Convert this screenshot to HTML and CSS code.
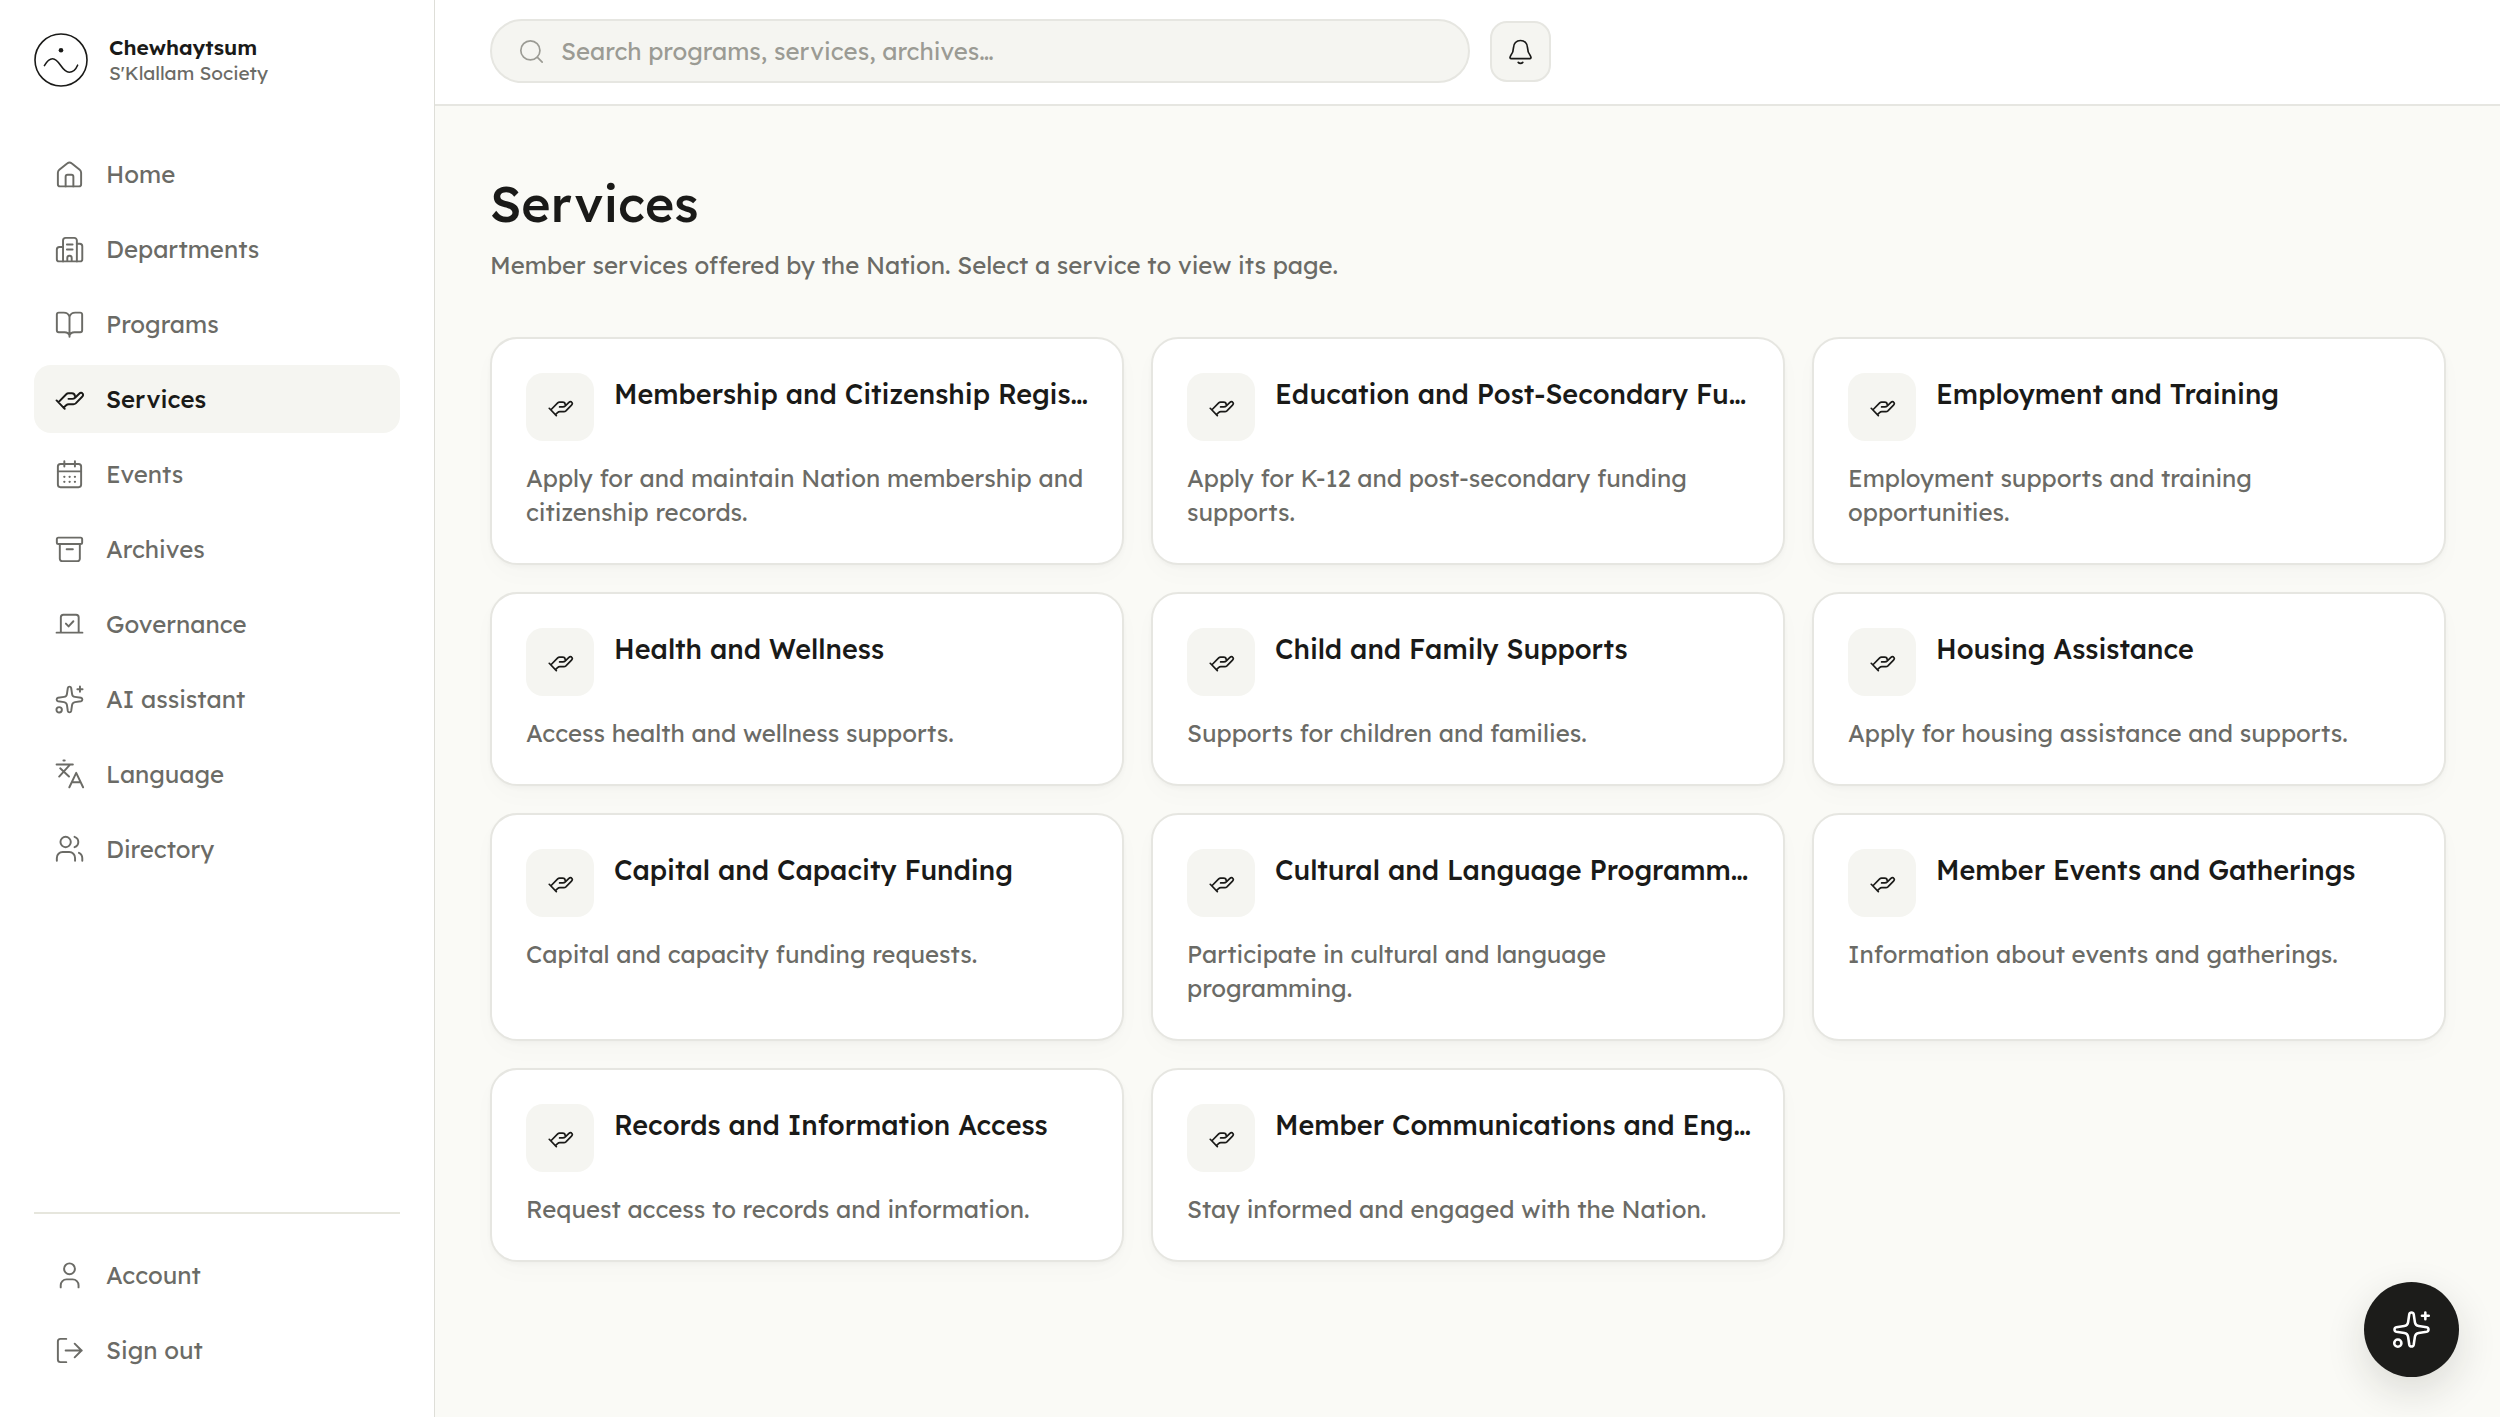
FILE: index.html
```html
<!DOCTYPE html>
<html lang="en">
<head>
<meta charset="utf-8">
<meta name="viewport" content="width=device-width, initial-scale=1">
<title>Services</title>
<link rel="stylesheet" href="styles.css">
</head>
<body>
<svg class="sprite" aria-hidden="true">
  <symbol id="home" viewBox="0 0 24 24"><path d="M3 10.6a3 3 0 0 1 1.1-2.3l6.3-5a2.5 2.5 0 0 1 3.2 0l6.3 5a3 3 0 0 1 1.1 2.3v8.9a1.7 1.7 0 0 1-1.7 1.7H4.700a1.700 1.700 0 0 1-1.700-1.700z"/><path d="M9 21.200v-7.500a1.500 1.500 0 0 1 1.500-1.500h3a1.500 1.500 0 0 1 1.500 1.500v7.500"/></symbol>
  <symbol id="building" viewBox="0 0 24 24"><path d="M7 21.200V5a2 2 0 0 1 2-2h6.700a2 2 0 0 1 2 2v16.200"/><path d="M7 10H4.200a2 2 0 0 0-2 2v7.500a1.700 1.700 0 0 0 1.700 1.700h16.300a1.700 1.700 0 0 0 1.700-1.700V9.500a2 2 0 0 0-2-2h-2.200M10 8.200h4.400M10 12h4.400M10.300 21v-2.500a1.700 1.700 0 0 1 3.400 0V21"/></symbol>
  <symbol id="book" viewBox="0 0 24 24"><path d="M12 6v15.500M12 6c-.6-2-2.200-3.200-4.500-3.200H3.700a1.500 1.500 0 0 0-1.500 1.500v12.200A1.500 1.500 0 0 0 3.700 18h4.500c2 0 3.300.8 3.800 2.500.5-1.700 1.800-2.500 3.800-2.500h4.500a1.500 1.500 0 0 0 1.500-1.500V4.300a1.500 1.500 0 0 0-1.500-1.500h-3.800C14.200 2.800 12.600 4 12 6z"/></symbol>
  <symbol id="hand" viewBox="0 0 24 24"><path d="m2 12.700 6.300 6.500M3.500 14l6-6.100a2.400 2.400 0 0 1 1.700-.7h2.600c1.600 0 2.300 1 2.300 2M11.200 11.500h2.900c1 0 1.600-.3 2.200-.9l3.200-3.100c.9-.9 2-.8 2.500-.2.700.8.500 1.900-.2 2.600l-5 5.100a2.600 2.600 0 0 1-1.800.7h-3.600a3 3 0 0 0-2 .8l-2 1.900"/></symbol>
  <symbol id="calendar" viewBox="0 0 24 24"><rect x="3" y="3.800" width="18" height="18" rx="2"/><path d="M3 9.600h18M8 1.800v4M16.200 1.800v4"/><path class="dots" d="M8 13.800h.01M12.100 13.800h.01M16.200 13.800h.01M8 17.700h.01M12.100 17.700h.01M16.200 17.700h.01"/></symbol>
  <symbol id="archive" viewBox="0 0 24 24"><rect x="2.200" y="2.800" width="19.600" height="5" rx="1.200"/><path d="M4.500 7.800V19.200A1.800 1.800 0 0 0 6.300 21h11.900a1.800 1.800 0 0 0 1.800-1.800V7.800M9.800 11.800h4.800"/></symbol>
  <symbol id="vote" viewBox="0 0 24 24"><path d="M2 18.300h20M5.300 18.300V6.400a2 2 0 0 1 2-2h9.800a2 2 0 0 1 2 2v11.900M9.200 11.300l2.100 2.200 3.700-4"/></symbol>
  <symbol id="sparkle" viewBox="0 0 24 24"><path d="M10.700 3.100c.3-1.400 2.300-1.400 2.600 0l.7 4.700c.2 1.300.9 2 2.200 2.200l4.700.7c1.400.3 1.400 2.300 0 2.600l-4.700.7c-1.300.2-2 .9-2.200 2.200l-.7 4.700c-.3 1.400-2.300 1.400-2.600 0l-.7-4.700c-.2-1.300-.9-2-2.200-2.200l-4.700-.7c-1.400-.3-1.400-2.300 0-2.600l4.700-.7c1.300-.2 2-.9 2.200-2.200zM20.100 2v4M22.100 4h-4"/><circle cx="4" cy="20" r="2.100"/></symbol>
  <symbol id="language" viewBox="0 0 24 24"><path d="M2 4.200h12.600M7.300 1.200h1M12.400 4.400 4 13.600M4.800 7.200l6.800 6.400M11.900 21.900l5.300-11.200 5.300 11.200M13.800 18h6.800"/></symbol>
  <symbol id="users" viewBox="0 0 24 24"><circle cx="9" cy="6.200" r="4"/><path d="M15.900 2.200a4.200 4.200 0 0 1 0 8M2.200 20.700v-2.200a4.500 4.500 0 0 1 4.500-4.500h5.100a4.500 4.500 0 0 1 4.500 4.500v2.200M19.300 14.600c1.700.7 2.600 2.200 2.600 4.200v1.900"/></symbol>
  <symbol id="user" viewBox="0 0 24 24"><circle cx="12" cy="6.800" r="4.200"/><path d="M5.200 21.200v-1.700a4.500 4.500 0 0 1 4.500-4.500h4.800a4.500 4.500 0 0 1 4.500 4.500v1.700"/></symbol>
  <symbol id="signout" viewBox="0 0 24 24"><path d="M9.500 3H5a2 2 0 0 0-2 2v14a2 2 0 0 0 2 2h4.500M9 12h12.500M16 6.700l5.300 5.300-5.300 5.300"/></symbol>
  <symbol id="search" viewBox="0 0 24 24"><circle cx="11" cy="11" r="8.500"/><path d="m17.300 17.300 4.200 4.200"/></symbol>
  <symbol id="bell" viewBox="0 0 24 24"><path d="M12 2.200c-3.700 0-6.200 2.700-6.200 6.200 0 3.700-.7 5-2.700 7.700-.8 1.200-.4 2.200.7 2.200h16.400c1.100 0 1.500-1 .7-2.200-2-2.700-2.700-4-2.700-7.700 0-3.500-2.500-6.200-6.200-6.200zM10 21.700c1 1.200 3 1.200 4 0"/></symbol>
</svg>

<div class="app">
  <aside class="sidebar">
    <a class="brand" href="#">
      <svg class="brand-mark" viewBox="0 0 54 54" aria-hidden="true"><circle cx="27" cy="27" r="26"/><circle class="brand-dot" cx="27" cy="17.300" r="2.300"/><path d="M10.400 32.600C13 28.300 15.600 25.800 18.600 25.800c7 0 9 13.400 16.600 13.400 3.400 0 6.800-3.200 8.400-7"/></svg>
      <span class="brand-text"><span class="brand-name">Chewhaytsum</span><span class="brand-sub">S'Klallam Society</span></span>
    </a>
    <nav class="nav">
      <a class="nav-item" href="#"><svg class="icon"><use href="#home"/></svg>Home</a>
      <a class="nav-item" href="#"><svg class="icon"><use href="#building"/></svg>Departments</a>
      <a class="nav-item" href="#"><svg class="icon"><use href="#book"/></svg>Programs</a>
      <a class="nav-item active" href="#" aria-current="page"><svg class="icon"><use href="#hand"/></svg>Services</a>
      <a class="nav-item" href="#"><svg class="icon"><use href="#calendar"/></svg>Events</a>
      <a class="nav-item" href="#"><svg class="icon"><use href="#archive"/></svg>Archives</a>
      <a class="nav-item" href="#"><svg class="icon"><use href="#vote"/></svg>Governance</a>
      <a class="nav-item" href="#"><svg class="icon"><use href="#sparkle"/></svg>AI assistant</a>
      <a class="nav-item" href="#"><svg class="icon"><use href="#language"/></svg>Language</a>
      <a class="nav-item" href="#"><svg class="icon"><use href="#users"/></svg>Directory</a>
    </nav>
    <div class="nav nav-footer">
      <a class="nav-item" href="#"><svg class="icon"><use href="#user"/></svg>Account</a>
      <button class="nav-item" type="button"><svg class="icon"><use href="#signout"/></svg>Sign out</button>
    </div>
  </aside>

  <div class="page">
    <header class="topbar">
      <label class="search"><svg class="icon"><use href="#search"/></svg><input type="search" placeholder="Search programs, services, archives…" aria-label="Search"></label>
      <button class="bell" type="button" aria-label="Notifications"><svg class="icon"><use href="#bell"/></svg></button>
    </header>
    <main class="content">
      <h1 class="title">Services</h1>
      <p class="lead">Member services offered by the Nation. Select a service to view its page.</p>
      <div class="grid">
        <a class="card" href="#"><span class="card-head"><span class="tile"><svg class="icon"><use href="#hand"/></svg></span><span class="card-title">Membership and Citizenship Regis…</span></span><span class="card-text">Apply for and maintain Nation membership and citizenship records.</span></a>
        <a class="card" href="#"><span class="card-head"><span class="tile"><svg class="icon"><use href="#hand"/></svg></span><span class="card-title">Education and Post-Secondary Fu…</span></span><span class="card-text">Apply for K-12 and post-secondary funding supports.</span></a>
        <a class="card" href="#"><span class="card-head"><span class="tile"><svg class="icon"><use href="#hand"/></svg></span><span class="card-title">Employment and Training</span></span><span class="card-text">Employment supports and training opportunities.</span></a>
        <a class="card" href="#"><span class="card-head"><span class="tile"><svg class="icon"><use href="#hand"/></svg></span><span class="card-title">Health and Wellness</span></span><span class="card-text">Access health and wellness supports.</span></a>
        <a class="card" href="#"><span class="card-head"><span class="tile"><svg class="icon"><use href="#hand"/></svg></span><span class="card-title">Child and Family Supports</span></span><span class="card-text">Supports for children and families.</span></a>
        <a class="card" href="#"><span class="card-head"><span class="tile"><svg class="icon"><use href="#hand"/></svg></span><span class="card-title">Housing Assistance</span></span><span class="card-text">Apply for housing assistance and supports.</span></a>
        <a class="card" href="#"><span class="card-head"><span class="tile"><svg class="icon"><use href="#hand"/></svg></span><span class="card-title">Capital and Capacity Funding</span></span><span class="card-text">Capital and capacity funding requests.</span></a>
        <a class="card" href="#"><span class="card-head"><span class="tile"><svg class="icon"><use href="#hand"/></svg></span><span class="card-title">Cultural and Language Programm…</span></span><span class="card-text">Participate in cultural and language programming.</span></a>
        <a class="card" href="#"><span class="card-head"><span class="tile"><svg class="icon"><use href="#hand"/></svg></span><span class="card-title">Member Events and Gatherings</span></span><span class="card-text">Information about events and gatherings.</span></a>
        <a class="card" href="#"><span class="card-head"><span class="tile"><svg class="icon"><use href="#hand"/></svg></span><span class="card-title">Records and Information Access</span></span><span class="card-text">Request access to records and information.</span></a>
        <a class="card" href="#"><span class="card-head"><span class="tile"><svg class="icon"><use href="#hand"/></svg></span><span class="card-title">Member Communications and Eng…</span></span><span class="card-text">Stay informed and engaged with the Nation.</span></a>
      </div>
    </main>
  </div>
</div>
<button class="fab" type="button" aria-label="AI assistant"><svg class="icon"><use href="#sparkle"/></svg></button>
</body>
</html>
```
FILE: styles.css
```css
:root {
  --ink: #1a1a18;
  --muted: #6b6b66;
  --faint: #9b9b94;
  --line: #e6e6e1;
  --fill: #f5f5f1;
  --ground: #fafaf6;
}

* { box-sizing: border-box; }

body {
  margin: 0;
  background: var(--ground);
  color: var(--ink);
  font: 400 24px/34px Lexend, Inter, sans-serif;
}

a { color: inherit; text-decoration: none; }
button, input { font: inherit; color: inherit; }
button { cursor: pointer; }

.sprite { display: none; }

.icon {
  flex: none;
  width: 31px;
  height: 31px;
  fill: none;
  stroke: currentColor;
  stroke-width: 1.5;
  stroke-linecap: round;
  stroke-linejoin: round;
}

.app { display: flex; min-height: 100vh; }

/* Sidebar */
.sidebar {
  position: sticky;
  top: 0;
  flex: none;
  display: flex;
  flex-direction: column;
  width: 435px;
  height: 100vh;
  padding: 33px 34px 33px;
  background: #fff;
  border-right: 1px solid #deded8;
}

.brand { display: flex; align-items: center; gap: 21px; margin-bottom: 53px; }
.brand-mark { width: 54px; height: 54px; fill: none; stroke: var(--ink); stroke-width: 1.6; stroke-linecap: round; }
.brand-dot { fill: var(--ink); stroke: none; }
.brand-text { display: flex; flex-direction: column; line-height: 26px; }
.brand-name { font-size: 21px; font-weight: 600; }
.brand-sub { font-size: 19px; color: var(--muted); }

.nav { display: flex; flex-direction: column; gap: 7px; }

.nav-item {
  display: flex;
  align-items: center;
  gap: 21px;
  padding: 17px 20px;
  border: 0;
  border-radius: 17px;
  background: none;
  color: var(--muted);
  text-align: left;
}

.nav-item.active { background: var(--fill); color: var(--ink); font-weight: 500; }

.nav-footer {
  margin-top: auto;
  padding-top: 27px;
  border-top: 2px solid #e6e6dd;
}

/* Page */
.page { flex: 1; min-width: 0; }

.topbar {
  display: flex;
  align-items: center;
  gap: 20px;
  padding: 19px 54px 21px 55px;
  background: #fff;
  border-bottom: 2px solid var(--line);
}

.search {
  display: flex;
  align-items: center;
  flex: 0 1 980px;
  gap: 16px;
  height: 64px;
  padding: 0 26px;
  border: 2px solid var(--line);
  border-radius: 32px;
  background: var(--fill);
  color: var(--faint);
}

.search .icon, .bell .icon, .tile .icon { width: 27px; height: 27px; }
.search input { flex: 1; min-width: 0; padding: 0; border: 0; outline: 0; background: none; }
.search input::placeholder { color: var(--faint); opacity: 1; }

.bell {
  display: grid;
  place-items: center;
  width: 61px;
  height: 61px;
  padding: 0;
  border: 2px solid var(--line);
  border-radius: 17px;
  background: var(--fill);
}

.content { padding: 66px 54px 66px 55px; }
.title { margin: 0; font-size: 50px; line-height: 64px; font-weight: 500; }
.lead { margin: 12px 0 55px; color: var(--muted); }

.grid { display: grid; grid-template-columns: repeat(3, minmax(0, 1fr)); gap: 27px; }

.card {
  display: flex;
  flex-direction: column;
  gap: 20px;
  padding: 34px;
  border: 2px solid var(--line);
  border-radius: 27px;
  background: #fff;
  box-shadow: 0 2px 4px rgb(26 26 24 / 3%), 0 10px 24px rgb(26 26 24 / 2%);
}

.card-head { display: flex; gap: 20px; }

.tile {
  display: grid;
  place-items: center;
  flex: none;
  width: 68px;
  height: 68px;
  border-radius: 17px;
  background: var(--fill);
}

.card-title {
  min-width: 0;
  padding-top: 4px;
  font-size: 27px;
  font-weight: 500;
  white-space: nowrap;
}

.card-text { color: var(--muted); }

.fab {
  position: fixed;
  right: 41px;
  bottom: 40px;
  display: grid;
  place-items: center;
  width: 95px;
  height: 95px;
  padding: 0;
  border: 0;
  border-radius: 50%;
  background: #1c1c1a;
  color: #fff;
  box-shadow: 0 14px 40px rgb(26 26 24 / 14%);
}

.fab .icon { width: 41px; height: 41px; }

.dots { stroke-width: 1.8; }
```
